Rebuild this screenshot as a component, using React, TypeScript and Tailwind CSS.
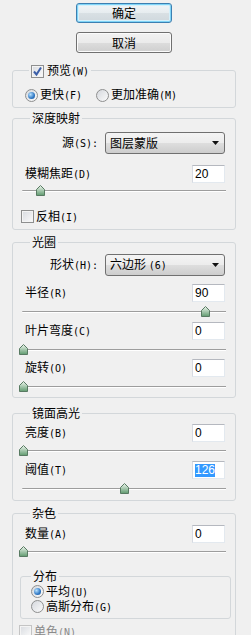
import clsx from "clsx";
import type { ReactNode } from "react";

// CJK part in the sans face, "(X)" part in a narrow mono face like the dialog's bitmap font
function Txt({ text, className }: { text: string; className?: string }) {
  const i = text.indexOf("(");
  if (i < 0) return <span className={clsx("leading-[14px]", className)}>{text}</span>;
  return (
    <span className={clsx("leading-[14px] whitespace-nowrap", className)}>
      {text.slice(0, i)}
      <span className="font-['DejaVu_Sans_Mono',monospace] text-[10px]">{text.slice(i)}</span>
    </span>
  );
}

function Checkbox({ checked, disabled }: { checked?: boolean; disabled?: boolean }) {
  return (
    <span
      className={clsx(
        "relative inline-block w-[13px] h-[13px] shrink-0 border bg-[linear-gradient(135deg,#d8dbe0,#fbfbfb)] shadow-[inset_0_0_0_1px_#f4f4f4]",
        disabled ? "border-[#c4c4c4]" : "border-[#8e8f8f]"
      )}
    >
      {checked && (
        <svg className="absolute left-0 top-0" width="11" height="11" viewBox="0 0 11 11">
          <path d="M2 5.5 L4.5 8.5 L9 1.5" fill="none" stroke="#3c5fa8" strokeWidth="2" />
        </svg>
      )}
    </span>
  );
}

function Radio({ checked }: { checked?: boolean }) {
  return (
    <span className="flex items-center justify-center w-[13px] h-[13px] shrink-0 rounded-full border border-[#8e8f8f] bg-[linear-gradient(135deg,#d5d8dd,#fbfbfb)]">
      {checked && (
        <span className="w-[7px] h-[7px] rounded-full bg-[radial-gradient(circle_at_35%_35%,#b8e2ff,#2f78c4_60%,#1c4f8e)]" />
      )}
    </span>
  );
}

// group box: the title sits on the top border line, covering it
function Group({
  legend,
  legendClass = "ml-[17px]",
  className,
  bodyClass,
  children,
}: {
  legend: ReactNode;
  legendClass?: string;
  className?: string;
  bodyClass?: string;
  children: ReactNode;
}) {
  return (
    <div className={clsx("border border-[#d3d7da] rounded-[3px]", className)}>
      <div className={clsx("-mt-[8px] w-fit px-[2px] leading-[14px] bg-[#f0f0f0]", legendClass)}>{legend}</div>
      <div className={bodyClass}>{children}</div>
    </div>
  );
}

function Select({ label, value, className }: { label: string; value: string; className?: string }) {
  return (
    <div className={clsx("flex items-center justify-end gap-[7px]", className)}>
      <Txt text={label} />
      <div className="flex items-center justify-between w-[120px] h-[22px] pl-[4px] pr-[5px] rounded-[3px] border border-[#707070] bg-[linear-gradient(#f4f4f4,#ececec_50%,#dedede_50%,#cdcdcd)]">
        <Txt text={value} />
        <svg width="7" height="4" viewBox="0 0 7 4">
          <path d="M0 0 H7 L3.5 4 Z" fill="#111" />
        </svg>
      </div>
    </div>
  );
}

function Field({
  label,
  value,
  selected,
  className,
}: {
  label: string;
  value: string;
  selected?: boolean;
  className?: string;
}) {
  return (
    <div className={clsx("flex items-center justify-between", className)}>
      <Txt text={label} />
      <div className="flex items-center w-[33px] h-[18px] pl-[2px] bg-white border border-[#e3e9ef] border-t-[#b5b8bf] border-l-[#d6dae1] font-['Liberation_Sans',sans-serif] text-[12px]">
        {selected ? <span className="bg-[#3399ff] text-white leading-[13px]">{value}</span> : value}
      </div>
    </div>
  );
}

// slider box spans x 20..226, thumb is given by its centre x on the page
function Slider({ thumb, className }: { thumb: number; className?: string }) {
  return (
    <div className={clsx("relative -ml-[5px] -mr-[1px] h-[11px]", className)}>
      <div className="absolute left-[2px] right-0 top-[5px] h-[2px] rounded-l-[2px] border-t border-[#9d9d9d] bg-white" />
      <svg className="absolute top-0" style={{ left: thumb - 20 - 4.5 }} width="9" height="11" viewBox="0 0 9 11">
        <defs>
          <linearGradient id="thumb" x1="0" y1="0" x2="0" y2="1">
            <stop offset="0" stopColor="#eef6ee" />
            <stop offset="1" stopColor="#5f9a6e" />
          </linearGradient>
        </defs>
        <path d="M4.5 0.5 L8.5 4.5 L8.5 10.5 L0.5 10.5 L0.5 4.5 Z" fill="url(#thumb)" stroke="#587a62" />
      </svg>
    </div>
  );
}

const outer = "ml-[12px] w-[224px]";

export default function App() {
  return (
    <div className="w-[251px] h-[635px] overflow-hidden bg-[#f0f0f0] pt-[3px] text-[12px] text-black font-['Noto_Sans_CJK_SC',sans-serif]">
      <button className="ml-[76px] flex items-center justify-center w-[96px] h-[20px] rounded-[3px] border border-[#3c7fb1] bg-[linear-gradient(#f2f5f7,#e6ecef_50%,#d9e0e4_50%,#cfd8dd)] shadow-[inset_0_0_0_1px_#7fd4f7,inset_0_0_0_2px_#d4f0fb] leading-[14px]">
        确定
      </button>
      <button className="ml-[76px] mt-[9px] flex items-center justify-center w-[96px] h-[21px] rounded-[3px] border border-[#707070] bg-[linear-gradient(#f2f2f2,#ebebeb_50%,#dddddd_50%,#cfcfcf)] shadow-[inset_0_0_0_1px_#fbfbfb] leading-[14px]">
        取消
      </button>

      <Group
        className={clsx(outer, "mt-[17px]")}
        legendClass="ml-[16px]"
        bodyClass="pl-[12px] pr-[10px] pb-[5px]"
        legend={
          <span className="flex items-center gap-[3px]">
            <Checkbox checked />
            <Txt text="预览(W)" />
          </span>
        }
      >
        <div className="mt-[9px] flex items-center h-[14px]">
          <div className="flex items-center gap-[2px] w-[71px]">
            <Radio checked />
            <Txt text="更快(F)" />
          </div>
          <div className="flex items-center gap-[2px]">
            <Radio />
            <Txt text="更加准确(M)" />
          </div>
        </div>
      </Group>

      <Group className={clsx(outer, "mt-[10px]")} bodyClass="pl-[12px] pr-[10px] pb-[6px]" legend="深度映射">
        <Select className="mt-[7px]" label="源(S):" value="图层蒙版" />
        <Field className="mt-[11px]" label="模糊焦距(D)" value="20" />
        <Slider className="mt-[2px]" thumb={40} />
        <div className="mt-[14px] -ml-[4px] flex items-center gap-[2px] h-[13px]">
          <Checkbox />
          <Txt text="反相(I)" />
        </div>
      </Group>

      <Group className={clsx(outer, "mt-[12px]")} bodyClass="pl-[12px] pr-[10px] pb-[5px]" legend="光圈">
        <Select className="mt-[5px]" label="形状(H):" value="六边形 (6)" />
        <Field className="mt-[8px]" label="半径(R)" value="90" />
        <Slider className="mt-[4px]" thumb={205} />
        <Field className="mt-[5px]" label="叶片弯度(C)" value="0" />
        <Slider className="mt-[4px]" thumb={23.5} />
        <Field className="mt-[4px]" label="旋转(O)" value="0" />
        <Slider className="mt-[4px]" thumb={23.5} />
      </Group>

      <Group className={clsx(outer, "mt-[15px]")} bodyClass="pl-[12px] pr-[10px] pb-[6px]" legend="镜面高光">
        <Field className="mt-[4px]" label="亮度(B)" value="0" />
        <Slider className="mt-[3px]" thumb={23.5} />
        <Field className="mt-[5px]" label="阈值(T)" value="126" selected />
        <Slider className="mt-[4px]" thumb={124} />
      </Group>

      <Group className={clsx(outer, "mt-[12px]")} bodyClass="pl-[12px] pr-[10px] pb-[8px]" legend="杂色">
        <Field className="mt-[5px]" label="数量(A)" value="0" />
        <Slider className="mt-[3px]" thumb={23.5} />
        <Group
          className="mt-[19px] -ml-[5px] w-[211px]"
          legendClass="ml-[10px]"
          bodyClass="pl-[10px] pb-[4px]"
          legend="分布"
        >
          <div className="mt-[1px] flex items-center gap-[2px] h-[15px]">
            <Radio checked />
            <Txt text="平均(U)" />
          </div>
          <div className="flex items-center gap-[2px] h-[15px]">
            <Radio />
            <Txt text="高斯分布(G)" />
          </div>
        </Group>
        <div className="mt-[6px] -ml-[6px] flex items-center gap-[2px] h-[13px]">
          <Checkbox disabled />
          <Txt text="单色(N)" className="text-[#8a8a8a]" />
        </div>
      </Group>
    </div>
  );
}
